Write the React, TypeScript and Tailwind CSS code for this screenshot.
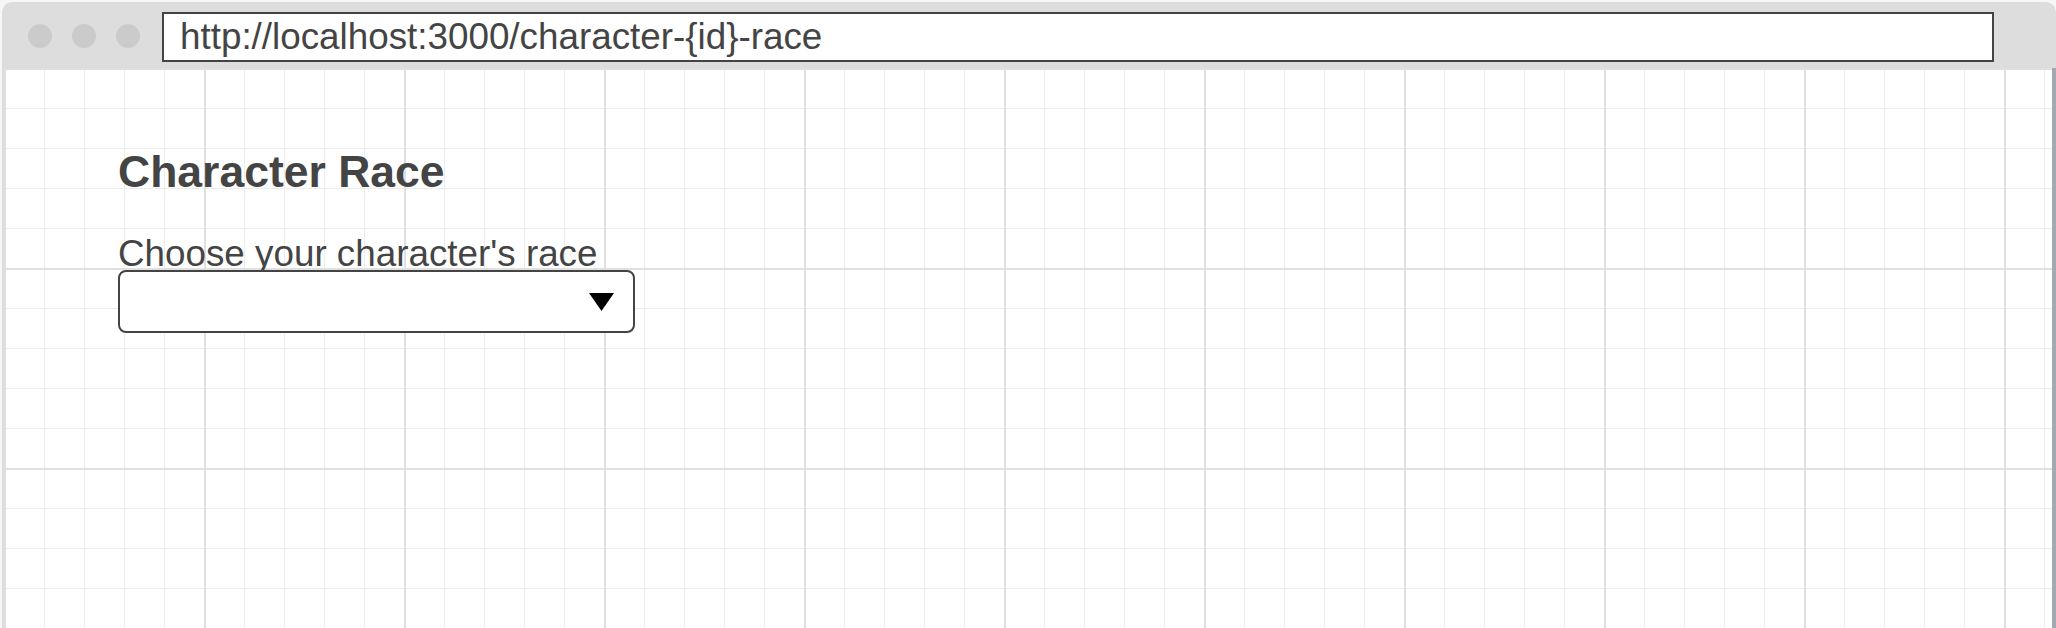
import React from 'react';

const gridBg =
  'bg-[linear-gradient(to_right,#e0e0e0_2px,transparent_2px),linear-gradient(to_bottom,#e0e0e0_2px,transparent_2px),linear-gradient(to_right,#ececec_1.5px,transparent_1.5px),linear-gradient(to_bottom,#ececec_1.5px,transparent_1.5px)] bg-[size:200px_200px,200px_200px,40px_40px,40px_40px]';

export default function App() {
  return (
    <div className="w-[2056px] h-[628px] overflow-hidden bg-[#f6f6f6] pt-[2px] pl-[2px] font-['Liberation_Sans',Arial,sans-serif] text-[#444444]">
      <div className="flex flex-col h-full w-[2054px]">
        {/* Browser chrome */}
        <div className="h-[66px] flex-shrink-0 flex items-start pt-[10px] pl-[26px] bg-[#dddddd] rounded-t-[10px]">
          <div className="flex gap-[20px] mt-[12px]">
            <div className="w-[24px] h-[24px] rounded-full bg-[#cbcbcb]"></div>
            <div className="w-[24px] h-[24px] rounded-full bg-[#cbcbcb]"></div>
            <div className="w-[24px] h-[24px] rounded-full bg-[#cbcbcb]"></div>
          </div>
          <div className="ml-[22px] w-[1832px] h-[50px] border-2 border-[#444444] bg-white flex items-center pl-[16px]">
            <span className="text-[36.8px] leading-none text-[#444444]">http://localhost:3000/character-{'{id}'}-race</span>
          </div>
        </div>

        {/* Page content */}
        <div className={`flex-1 relative border-l-2 border-[#dcdcdc] bg-white ${gridBg}`}>
          <div className="absolute right-0 top-0 bottom-0 w-[4px] bg-[#a4a8b0]"></div>
          <div className="pl-[114px] pt-[79px] flex flex-col items-start">
            <h1 className="text-[44.5px] leading-[50px] font-bold text-[#444444]">Character Race</h1>
            <label className="mt-[38px] text-[36.8px] leading-[38px] text-[#444444]">Choose your character's race</label>
            <div className="-mt-[3px] w-[517px] h-[63px] border-2 border-[#444444] rounded-[8px] bg-white flex items-center justify-end pr-[19px]">
              <svg width="25" height="18" viewBox="0 0 25 18">
                <polygon points="0,0 25,0 12.5,18" fill="#000" />
              </svg>
            </div>
          </div>
        </div>
      </div>
    </div>
  );
}
